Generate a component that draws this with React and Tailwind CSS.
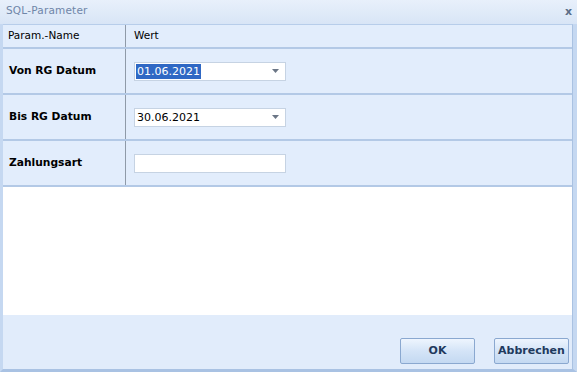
export default function App() {
  const rows = [
    { label: 'Von RG Datum', value: '01.06.2021', combo: true, selected: true },
    { label: 'Bis RG Datum', value: '30.06.2021', combo: true },
    { label: 'Zahlungsart', value: '', combo: false },
  ];

  return (
    <div
      className="w-[577px] h-[372px] flex flex-col bg-[#dfe9f7] overflow-hidden"
      style={{ fontFamily: '"DejaVu Sans", "Liberation Sans", sans-serif' }}
    >
      {/* Title bar */}
      <div className="h-[24px] flex items-center justify-between pl-[6px] pr-[5px] pb-[2px] bg-gradient-to-b from-[#e8f0fb] to-[#d8e5f6]">
        <span className="text-[10.5px] text-[#6f86a8] tracking-[0.2px]">SQL-Parameter</span>
        <span className="text-[11px] font-bold text-[#5a6c86] leading-none">x</span>
      </div>

      {/* Body */}
      <div className="flex-1 flex flex-col border-l-[3px] border-[#c5d8f1] border-r-[4px] border-b-[3px] border-b-[#a9c2e3]">
        <div className="flex-1 flex flex-col border-t border-[#b7cdea] border-r border-r-[#aac2e2]">
          {/* Grid header */}
          <div className="h-[24px] flex bg-[#e2edfc] border-b-[2px] border-[#b3c9e6]">
            <div className="w-[123px] border-r border-[#8f9aa8] flex items-center pl-[5px] text-[10.5px] text-black">
              Param.-Name
            </div>
            <div className="flex-1 flex items-center pl-[8px] text-[10.5px] text-black">Wert</div>
          </div>

          {rows.map((r) => (
            <div key={r.label} className="h-[46px] flex bg-[#e2edfc] border-b-[2px] border-[#b3c9e6]">
              <div className="w-[123px] border-r border-[#8f9aa8] flex items-center pl-[6px] text-[10.7px] font-bold text-black">
                {r.label}
              </div>
              <div className="flex-1 flex items-center pl-[8px]">
                <div className="w-[152px] h-[19px] bg-white border border-[#c6d3e3] flex items-center justify-between pl-[1px] pr-[6px]">
                  {r.selected ? (
                    <span className="bg-[#2f68c4] text-white text-[11px] leading-[15px] px-[1px]">{r.value}</span>
                  ) : (
                    <span className="text-black text-[11px] leading-[15px] px-[1px]">{r.value}</span>
                  )}
                  {r.combo && (
                    <svg width="7" height="4" viewBox="0 0 7 4">
                      <path d="M0 0 H7 L3.5 4 Z" fill="#6b7686" />
                    </svg>
                  )}
                </div>
              </div>
            </div>
          ))}

          {/* Empty white area */}
          <div className="flex-1 bg-white" />

          {/* Footer */}
          <div className="h-[54px] bg-[#e1ecfb] flex items-start justify-end gap-[19px] pt-[23px] pr-[3px]">
            <button className="w-[75px] h-[26px] rounded-[2px] border border-[#8aa8d0] bg-gradient-to-b from-[#eef5fe] via-[#d4e4f7] to-[#c4d9f2] text-[11px] font-bold text-[#1f3a5e]">
              OK
            </button>
            <button className="w-[75px] h-[26px] rounded-[2px] border border-[#8aa8d0] bg-gradient-to-b from-[#eef5fe] via-[#d4e4f7] to-[#c4d9f2] text-[11px] font-bold text-[#1f3a5e]">
              Abbrechen
            </button>
          </div>
        </div>
      </div>
    </div>
  );
}
